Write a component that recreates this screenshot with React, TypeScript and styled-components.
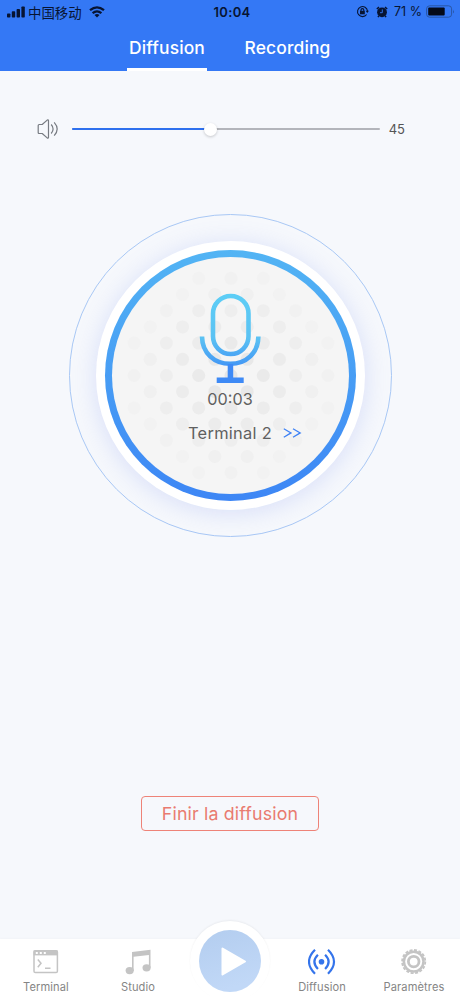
import React from "react";
import styled, { createGlobalStyle } from "styled-components";

const GlobalStyle = createGlobalStyle`
  *, *::before, *::after { box-sizing: border-box; }
  body { margin: 0; background: #f6f8fc; }
`;

const Screen = styled.div`
  width: 460px;
  height: 996px;
  display: flex;
  flex-direction: column;
  overflow: hidden;
  background: #f6f8fc;
  font-family: Inter, "Noto Sans CJK SC", sans-serif;
`;

const Header = styled.header`
  height: 71px;
  flex: none;
  display: flex;
  flex-direction: column;
  background: #3478f5;
`;

const StatusBar = styled.div`
  height: 23px;
  display: grid;
  grid-template-columns: 1fr auto 1fr;
  align-items: center;
  padding: 0 5px 0 7px;
  color: #071432;
`;

const StatusGroup = styled.div<{ $end?: boolean }>`
  display: flex;
  align-items: center;
  justify-content: ${(p) => (p.$end ? "flex-end" : "flex-start")};
`;

const Carrier = styled.span`
  margin: 0 7px 0 3px;
  font: 13.4px/20px "Noto Sans CJK SC", sans-serif;
`;

const Clock = styled.span`
  margin-left: 2px;
  font-size: 13px;
  font-weight: 600;
  letter-spacing: 0.35px;
`;

const Percent = styled.span`
  margin: 0 4px 0 6px;
  font-size: 12.5px;
  white-space: nowrap;
`;

const Tabs = styled.nav`
  flex: 1;
  display: flex;
  justify-content: center;
  gap: 37px;
  padding-right: 2px;
`;

const Tab = styled.div<{ $active?: boolean }>`
  width: ${(p) => (p.$active ? 80 : 87)}px;
  display: flex;
  align-items: center;
  justify-content: center;
  padding-top: 3px;
  border-bottom: 3px solid ${(p) => (p.$active ? "#fff" : "transparent")};
  color: #fff;
  font-size: 17.4px;
  font-weight: 500;
  letter-spacing: 0.15px;
`;

const Main = styled.main`
  flex: 1;
  display: flex;
  flex-direction: column;
  align-items: center;
`;

const Volume = styled.div`
  width: 460px;
  height: 22px;
  margin-top: 47px;
  padding: 0 55px 0 37px;
  display: flex;
  align-items: center;
`;

const Track = styled.div`
  width: 308px;
  height: 2.5px;
  margin: 0 9px 0 13px;
  display: flex;
  align-items: center;
  border-radius: 2px;
  background: #b3b5bb;
`;

const TrackFill = styled.div`
  width: 45%;
  height: 2.5px;
  flex: none;
  border-radius: 2px;
  background: #2e70ee;
`;

const Knob = styled.div`
  width: 13px;
  height: 13px;
  margin-left: -6px;
  flex: none;
  border-radius: 50%;
  background: #fff;
  box-shadow: 0 1px 3px rgba(0, 0, 0, 0.2);
`;

const VolumeValue = styled.span`
  color: #555;
  font-size: 13px;
`;

const Halo = styled.section`
  width: 323px;
  height: 323px;
  margin-top: 74px;
  display: grid;
  place-items: center;
  border: 1px solid #a9c8f5;
  border-radius: 50%;
`;

const Rim = styled.div`
  width: 269px;
  height: 269px;
  display: grid;
  place-items: center;
  border-radius: 50%;
  background: #fff;
  box-shadow: 0 3px 24px rgba(118, 142, 238, 0.24);
`;

const Ring = styled.div`
  width: 251px;
  height: 251px;
  padding: 7px;
  border-radius: 50%;
  background: linear-gradient(#52b4f4, #3d86f5);
`;

const Disc = styled.div`
  width: 237px;
  height: 237px;
  display: grid;
  border-radius: 50%;
  background: #f5f5f5;
  overflow: hidden;

  > * { grid-area: 1 / 1; }
`;

const DiscContent = styled.div`
  display: flex;
  flex-direction: column;
  align-items: center;
  padding: 36px 0 0;
  color: #606060;
`;

const Elapsed = styled.div`
  margin-top: 4px;
  font-size: 16.2px;
  line-height: 22px;
`;

const Target = styled.div`
  margin: 12px 0 0 30px;
  display: flex;
  align-items: center;
  gap: 11px;
  font-size: 16.4px;
  line-height: 22px;
  letter-spacing: 0.3px;
`;

const EndButton = styled.button`
  width: 178px;
  height: 35px;
  margin-top: 259px;
  padding: 0;
  border: 1px solid #ee8378;
  border-radius: 4px;
  background: transparent;
  color: #e97b70;
  font: 17.8px Inter, sans-serif;
  letter-spacing: 0.15px;
`;

const TabBar = styled.footer`
  height: 57px;
  flex: none;
  display: grid;
  grid-template-columns: repeat(5, 92px);
  background: #fff;
  box-shadow: 0 -1px 2px rgba(0, 0, 0, 0.02);
`;

const NavItem = styled.div`
  display: flex;
  flex-direction: column;
  align-items: center;
  padding-top: 10px;
  color: #858585;
  font-size: 11.1px;
  line-height: 14px;
  letter-spacing: 0.1px;

  svg { margin-bottom: 5px; }
`;

const PlayButton = styled.div`
  width: 80px;
  height: 80px;
  margin: -18px 0 0 6px;
  display: grid;
  place-items: center;
  border-radius: 50%;
  background: #fff;
  box-shadow: 0 -1px 2px rgba(0, 0, 0, 0.05);
`;

const SignalIcon = () => (
  <svg width="18" height="12" viewBox="0 0 18 12" fill="currentColor">
    <rect x="0" y="7.5" width="3.4" height="4" rx=".8" />
    <rect x="4.8" y="5.3" width="3.4" height="6.2" rx=".8" />
    <rect x="9.6" y="3" width="3.4" height="8.5" rx=".8" />
    <rect x="14.4" y="0.5" width="3.4" height="11" rx=".8" />
  </svg>
);

const WifiIcon = () => (
  <svg width="16" height="12" viewBox="0 0 16 12" fill="none" stroke="currentColor" strokeWidth="2.3">
    <path d="M1 4.2Q8-1.5 15 4.2M3.6 7.2Q8 3.5 12.4 7.2" />
    <path d="M5.5 9.1Q8 7.1 10.5 9.1L8 11.5Z" fill="currentColor" stroke="none" />
  </svg>
);

const LockIcon = () => (
  <svg width="13" height="13" viewBox="0 0 13 13" fill="none" stroke="currentColor" strokeWidth="1.1">
    <path d="M10.6 9.5A5 5 0 1 1 11.5 6" />
    <path d="M9.7 5.8h3.2L11.3 8Z" fill="currentColor" stroke="none" />
    <rect x="4" y="5.8" width="4.8" height="3.5" fill="currentColor" stroke="none" />
    <path d="M5 6V5a1.4 1.4 0 0 1 2.8 0v1" />
  </svg>
);

const AlarmIcon = styled(({ className }: { className?: string }) => (
  <svg className={className} width="12" height="12" viewBox="0 0 12 12">
    <circle cx="6" cy="6.3" r="4.9" fill="currentColor" />
    <path d="M.8 3 3 1.2M11.2 3 9 1.2M2.8 10 2 11.2M9.2 10l.8 1.2" stroke="currentColor" strokeWidth="1.5" />
    <path d="M6.3 3.4v3.3H4" fill="none" stroke="#3478f5" strokeWidth=".9" />
  </svg>
))`
  margin-left: 7px;
`;

const BatteryIcon = () => (
  <svg width="29" height="13" viewBox="0 0 29 13">
    <rect x=".6" y=".8" width="25" height="11.4" rx="3" fill="none" stroke="#2856a5" />
    <rect x="2.2" y="2.5" width="16.5" height="8" rx="1" fill="#040a18" />
    <path d="M27 4.5q1.7 2 0 4Z" fill="#2856a5" />
  </svg>
);

const SpeakerIcon = () => (
  <svg width="22" height="22" viewBox="0 0 22 22" fill="none" stroke="#777b82" strokeWidth="1.2" strokeLinejoin="round">
    <path d="M2.2 6.5h3l5-4.4q1.1-.8 1.3.4v17q-.2 1.2-1.3.4l-5-4.4h-3q-1 0-1-1v-7q0-1 1-1Z" />
    <path d="M14.2 6.5q3.8 4.4 0 9M17.2 4.3q6 6.7 0 13.4" />
  </svg>
);

const MicIcon = () => (
  <svg width="62" height="91" viewBox="0 0 62 91" fill="none">
    <defs>
      <linearGradient id="mic" gradientUnits="userSpaceOnUse" x1="0" y1="0" x2="0" y2="90">
        <stop stopColor="#5dcef6" />
        <stop offset=".5" stopColor="#5bc2f3" />
        <stop offset=".78" stopColor="#459bf5" />
        <stop offset="1" stopColor="#3c85f6" />
      </linearGradient>
    </defs>
    <g stroke="url(#mic)">
      <rect x="14" y="3" width="35.5" height="58" rx="17.75" strokeWidth="4.6" />
      <path d="M3 43.5C3.2 60 15.2 70.8 31.2 70.8S59.2 60 59.4 43.5" strokeWidth="4.6" />
    </g>
    <path d="M28.7 71h5.5v13.5h10.5v5.5h-27v-5.5h11Z" fill="#3e8af6" />
  </svg>
);

const dots: { x: number; y: number; o: number }[] = [];
for (let row = -6; row <= 6; row++) {
  for (let col = -4; col <= 4; col++) {
    const x = col * 32.3 + (row % 2 ? 16.15 : 0);
    const y = row * 16.2;
    const r = Math.hypot(x, y);
    if (r < 108) dots.push({ x: 119 + x, y: 118.5 + y, o: 0.9 - r / 135 });
  }
}

const DotPattern = () => (
  <svg width="237" height="237" viewBox="0 0 237 237" fill="#e4e4e4">
    {dots.map((d, i) => (
      <circle key={i} cx={d.x} cy={d.y} r="6.5" opacity={d.o} />
    ))}
  </svg>
);

const ChevronsIcon = () => (
  <svg width="19" height="11" viewBox="0 0 19 11" fill="none" stroke="#3f82f5" strokeWidth="1.3">
    <path d="M.8 .7 8 4.9.8 9.2M10 .7l7.2 4.2L10 9.2" />
  </svg>
);

const TerminalIcon = () => (
  <svg width="26" height="26" viewBox="0 0 26 26" fill="none" stroke="#c4c4c4" strokeWidth="1.5">
    <rect x="1" y="1.7" width="23.4" height="21.8" rx="1.3" />
    <path d="M.6 1.4h24v5H.6Z" fill="#c4c4c4" stroke="none" />
    <path d="M2.8 4h2M6.8 4h2M10.8 4h2" stroke="#fff" strokeWidth="1.8" />
    <path d="m4.8 10.6 3.2 3.7-3.2 3.9M12 19.3h5.5" />
  </svg>
);

const MusicIcon = () => (
  <svg width="26" height="26" viewBox="0 0 26 26" fill="#c4c4c4">
    <path d="M7 3 25.5.7v18h-1.6V6L8.6 7.8V22H7Z" />
    <ellipse cx="4.7" cy="21.6" rx="4.1" ry="3.6" />
    <ellipse cx="21.6" cy="18.8" rx="4.1" ry="3.6" />
  </svg>
);

const BroadcastIcon = () => (
  <svg width="28" height="26" viewBox="0 0 28 26" fill="none" stroke="#3474eb" strokeWidth="2.2">
    <circle cx="13.5" cy="12.8" r="2.8" fill="#3474eb" stroke="none" />
    <path d="M9.9 5.7q-7 7 0 14.2M17.1 5.7q7 7 0 14.2M7 .8q-12 11.8 0 24M20 .8q12 11.8 0 24" />
  </svg>
);

const GearIcon = () => (
  <svg width="26" height="26" viewBox="0 0 26 26" fill="none" stroke="#c4c4c4">
    <circle cx="12.7" cy="12.6" r="9.8" strokeWidth="2.5" />
    <circle cx="12.7" cy="12.6" r="11.6" strokeWidth="1.8" strokeDasharray="3 1.555" />
    <circle cx="12.7" cy="12.6" r="5.3" strokeWidth="2.8" />
  </svg>
);

const PlayIcon = () => (
  <svg width="62" height="62" viewBox="0 0 62 62">
    <defs>
      <linearGradient id="play" x1="0" y1="0" x2=".3" y2="1">
        <stop stopColor="#b3cdef" />
        <stop offset="1" stopColor="#c1d8f7" />
      </linearGradient>
    </defs>
    <circle cx="31" cy="31" r="31" fill="url(#play)" />
    <path d="M23.5 18.5 46 31.5 23.5 44.5Z" fill="#fff" stroke="#fff" strokeWidth="2" strokeLinejoin="round" />
  </svg>
);

export default function App() {
  return (
    <>
      <GlobalStyle />
      <Screen>
        <Header>
          <StatusBar>
            <StatusGroup>
              <SignalIcon />
              <Carrier>中国移动</Carrier>
              <WifiIcon />
            </StatusGroup>
            <Clock>10:04</Clock>
            <StatusGroup $end>
              <LockIcon />
              <AlarmIcon />
              <Percent>71 %</Percent>
              <BatteryIcon />
            </StatusGroup>
          </StatusBar>
          <Tabs>
            <Tab $active>Diffusion</Tab>
            <Tab>Recording</Tab>
          </Tabs>
        </Header>
        <Main>
          <Volume>
            <SpeakerIcon />
            <Track>
              <TrackFill />
              <Knob />
            </Track>
            <VolumeValue>45</VolumeValue>
          </Volume>
          <Halo>
            <Rim>
              <Ring>
                <Disc>
                  <DotPattern />
                  <DiscContent>
                    <MicIcon />
                    <Elapsed>00:03</Elapsed>
                    <Target>
                      <span>Terminal 2</span>
                      <ChevronsIcon />
                    </Target>
                  </DiscContent>
                </Disc>
              </Ring>
            </Rim>
          </Halo>
          <EndButton>Finir la diffusion</EndButton>
        </Main>
        <TabBar>
          <NavItem><TerminalIcon />Terminal</NavItem>
          <NavItem><MusicIcon />Studio</NavItem>
          <PlayButton><PlayIcon /></PlayButton>
          <NavItem><BroadcastIcon />Diffusion</NavItem>
          <NavItem><GearIcon />Paramètres</NavItem>
        </TabBar>
      </Screen>
    </>
  );
}
